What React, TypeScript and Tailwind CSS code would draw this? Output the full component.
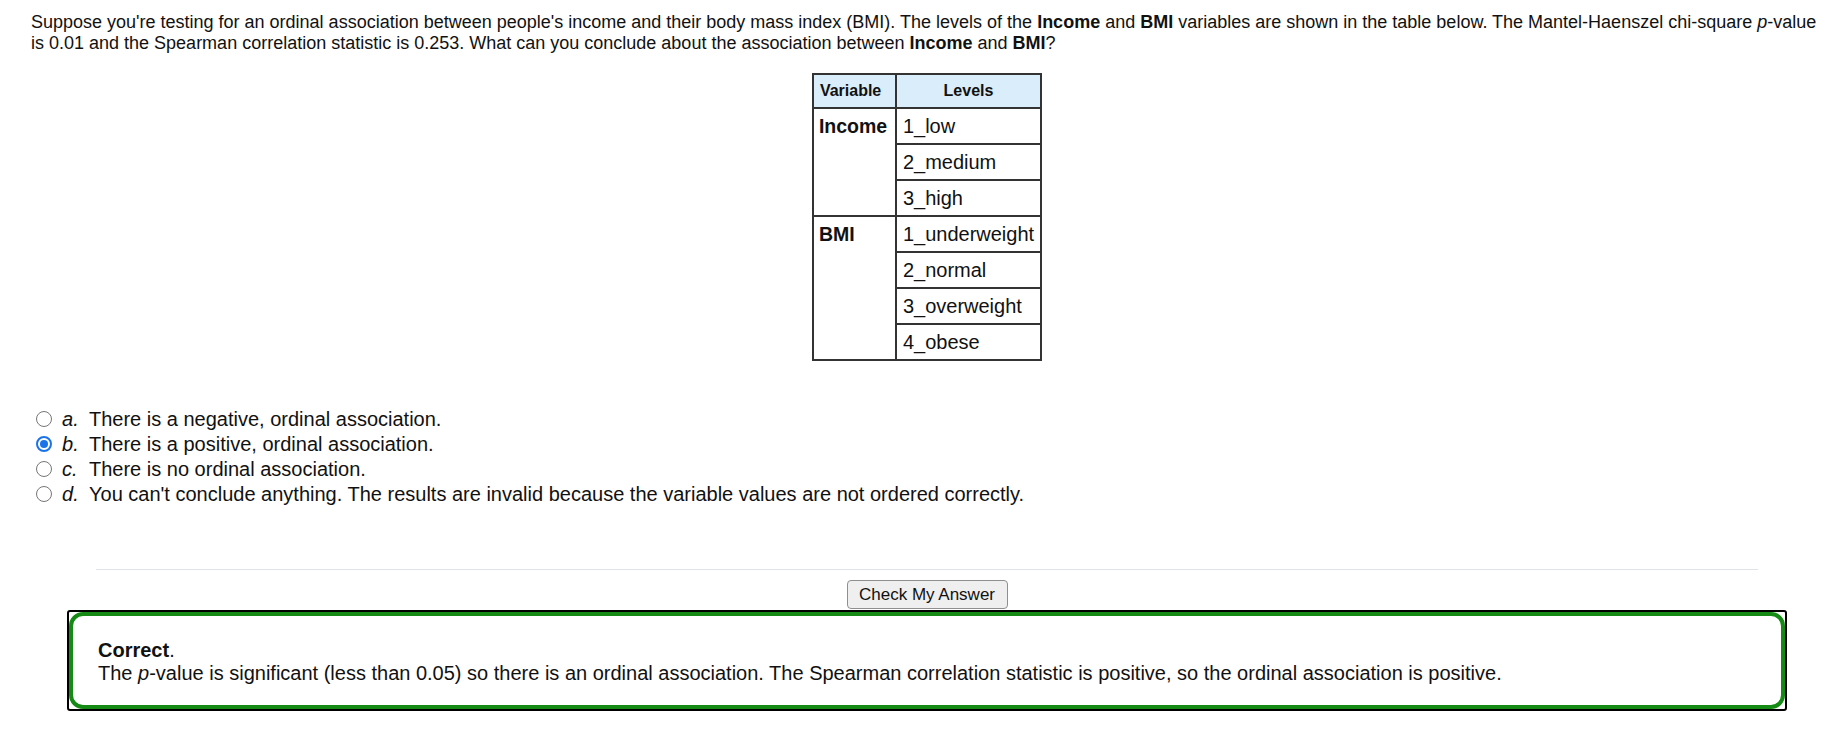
import React from 'react';

const options = [
  { key: 'a', text: 'There is a negative, ordinal association.' },
  { key: 'b', text: 'There is a positive, ordinal association.' },
  { key: 'c', text: 'There is no ordinal association.' },
  { key: 'd', text: "You can't conclude anything. The results are invalid because the variable values are not ordered correctly." },
];

const Radio: React.FC<{ checked?: boolean }> = ({ checked }) =>
  checked ? (
    <div className="w-[16px] h-[16px] rounded-full border-2 border-[#1a73e8] bg-white flex items-center justify-center">
      <div className="w-[8px] h-[8px] rounded-full bg-[#1a73e8]" />
    </div>
  ) : (
    <div className="w-[16px] h-[16px] rounded-full border border-[#767676] bg-white" />
  );

export default function App() {
  const cell = 'border-2 border-[#333] h-[36px] px-[6px] text-left align-middle';
  const income = ['1_low', '2_medium', '3_high'];
  const bmi = ['1_underweight', '2_normal', '3_overweight', '4_obese'];

  return (
    <div className="min-h-[740px] bg-white text-[#111] pl-[31px] pr-[3px] pt-[12px] font-['Liberation_Sans',Arial,sans-serif]">
      <p className="text-[18px] leading-[21px]">
        Suppose you're testing for an ordinal association between people's income and their body mass index (BMI). The levels of the{' '}
        <b>Income</b> and <b>BMI</b> variables are shown in the table below. The Mantel-Haenszel chi-square <i>p</i>-value is 0.01 and
        the Spearman correlation statistic is 0.253. What can you conclude about the association between <b>Income</b> and <b>BMI</b>?
      </p>

      <div className="flex justify-center mt-[19px]">
        <table className="border-collapse border-2 border-[#333]">
          <thead>
            <tr className="bg-[#d9edfa] text-[16px]">
              <th className="border-2 border-[#333] h-[34px] px-[6px] text-left w-[83px]">Variable</th>
              <th className="border-2 border-[#333] h-[34px] px-[6px] text-center w-[144px]">Levels</th>
            </tr>
          </thead>
          <tbody className="text-[20px]">
            {income.map((l, i) => (
              <tr key={l}>
                {i === 0 && (
                  <td rowSpan={3} className="border-2 border-[#333] px-[5px] align-top pt-[3px] font-bold text-[19.5px]">
                    Income
                  </td>
                )}
                <td className={cell}>{l}</td>
              </tr>
            ))}
            {bmi.map((l, i) => (
              <tr key={l}>
                {i === 0 && (
                  <td rowSpan={4} className="border-2 border-[#333] px-[5px] align-top pt-[3px] font-bold text-[19.5px]">
                    BMI
                  </td>
                )}
                <td className={cell}>{l}</td>
              </tr>
            ))}
          </tbody>
        </table>
      </div>

      <div className="mt-[45px] flex flex-col">
        {options.map((o) => (
          <div key={o.key} className="flex items-center h-[25px] text-[20px]">
            <div className="ml-[5px] mr-[10px]">
              <Radio checked={o.key === 'b'} />
            </div>
            <span className="italic w-[27px]">{o.key}.</span>
            <span>{o.text}</span>
          </div>
        ))}
      </div>

      <div className="mx-[65px] mt-[63px] border-t border-[#dde3e8]" />

      <div className="flex justify-center mt-[10px]">
        <button className="h-[29px] w-[161px] rounded-[4px] border border-[#8f8f8f] bg-[#efefef] text-[17px] text-[#111]">
          Check My Answer
        </button>
      </div>

      <div className="mx-[36px] mt-[1px] border-2 border-black rounded-[3px]">
        <div className="border-4 border-[#158a15] rounded-[14px] px-[25px] pt-[23px] pb-[20px] text-[20px] leading-[23px]">
          <div>
            <b>Correct</b>.
          </div>
          <div>
            The <i>p</i>-value is significant (less than 0.05) so there is an ordinal association. The Spearman correlation statistic is
            positive, so the ordinal association is positive.
          </div>
        </div>
      </div>
    </div>
  );
}
